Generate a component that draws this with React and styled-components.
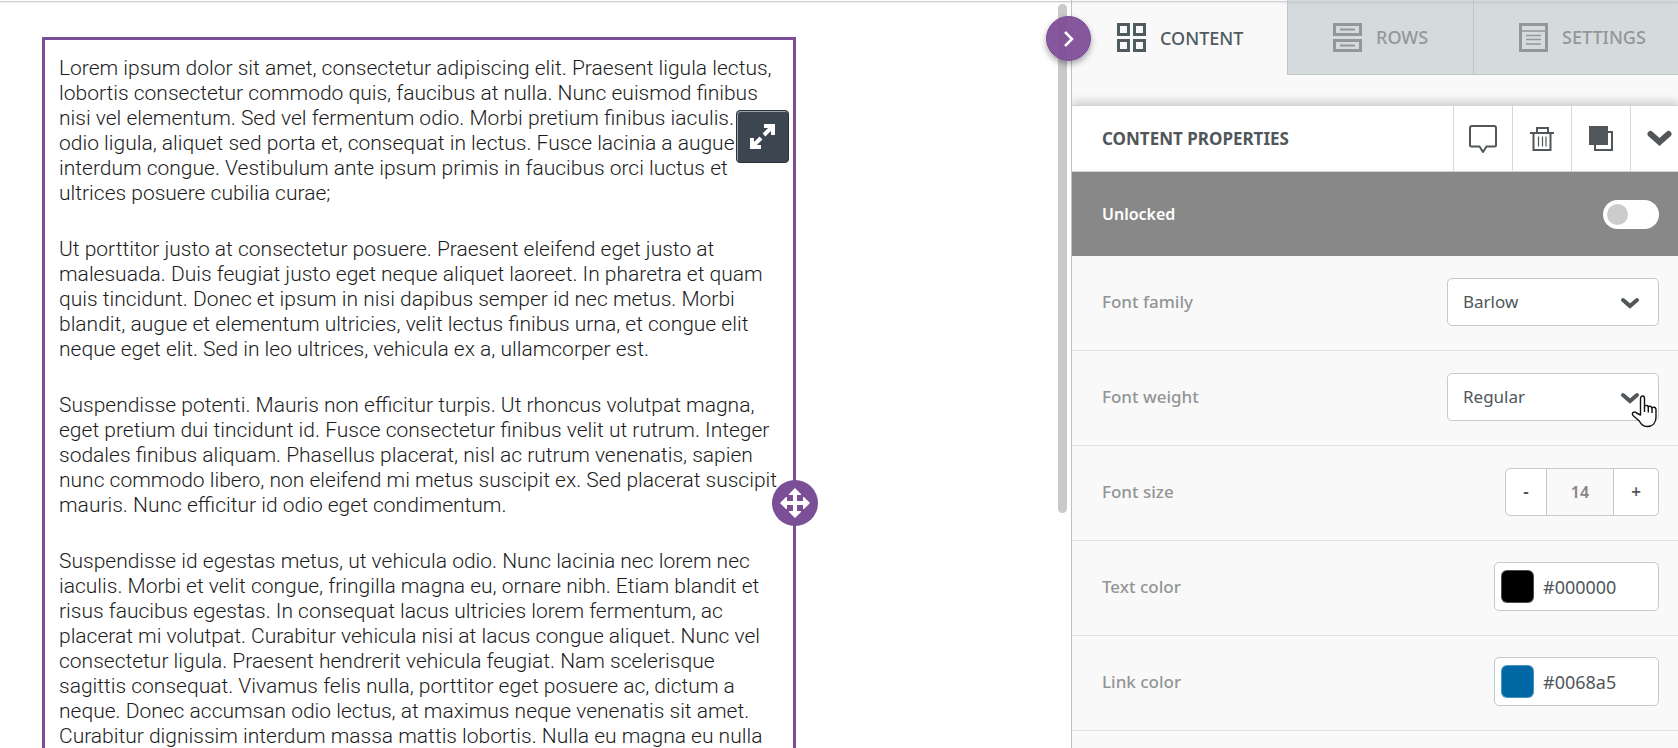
import React, { useState } from "react";
import styled, { createGlobalStyle } from "styled-components";

const GlobalStyle = createGlobalStyle`
  * {
    box-sizing: border-box;
  }

  body {
    margin: 0;
    overflow: hidden;
    background: #fff;
    color: #505659;
    font-family: "Noto Sans", "Open Sans", sans-serif;
  }

  button,
  input,
  select {
    margin: 0;
    font: inherit;
    color: inherit;
  }
`;

const Page = styled.div`
  display: grid;
  grid-template-columns: minmax(0, 1fr) minmax(480px, 607px);
  height: 100vh;
  overflow: hidden;
  position: relative;

  &::before {
    content: "";
    position: absolute;
    top: 1px;
    left: 0;
    right: 0;
    height: 1px;
    background: #ccd1d0;
    box-shadow: 0 1px 2px rgba(0, 0, 0, 0.12);
    z-index: 2;
  }
`;

const Stage = styled.main`
  display: flex;
  justify-content: space-between;
  min-width: 0;
  overflow: hidden;
  padding: 4px 4px 0 42px;
`;

const TextBlock = styled.article`
  position: relative;
  flex: 0 1 754px;
  min-width: 0;
  min-height: 1000px;
  margin-top: 33px;
  padding: 16px 14px;
  border: 3px solid #7b4f96;
  color: #1c1c1c;
  font-family: Roboto, sans-serif;
  font-size: 21px;
  font-weight: 300;
  line-height: 25px;
  white-space: nowrap;
`;

const Paragraph = styled.p`
  margin: 0 0 31px;
`;

const ExpandButton = styled.button`
  position: absolute;
  top: 70px;
  right: 4px;
  display: grid;
  place-items: center;
  width: 53px;
  height: 53px;
  padding: 0;
  border: 1px solid #2a333b;
  border-radius: 4px;
  background: #3b4650;
  box-shadow: inset 1px 1px rgba(255, 255, 255, 0.5);
`;

const MoveHandle = styled.button`
  position: absolute;
  top: 440px;
  right: -25px;
  display: grid;
  place-items: center;
  width: 46px;
  height: 46px;
  padding: 0;
  border: 0;
  border-radius: 50%;
  background: #7b4f96;
`;

const ScrollThumb = styled.div`
  flex: none;
  width: 9px;
  height: 509px;
  border-radius: 5px;
  background: #c9c9c9;
`;

const Panel = styled.aside`
  position: relative;
  min-width: 0;
  border-left: 1px solid #bfc2c3;
  background: #f9f9f9;
`;

const CollapseButton = styled.button`
  position: absolute;
  top: 16px;
  left: -26px;
  z-index: 3;
  display: grid;
  place-items: center;
  width: 45px;
  height: 45px;
  padding: 0;
  border: 1px solid #77498f;
  border-radius: 50%;
  background: rgba(127, 77, 152, 0.94);
  box-shadow: 0 3px 6px rgba(0, 0, 0, 0.35);
`;

const Tabs = styled.nav`
  display: grid;
  grid-template-columns: 215fr 186fr 205fr;
  height: 75px;
`;

const Tab = styled.button`
  display: flex;
  align-items: center;
  gap: 14px;
  min-width: 0;
  padding: 0 0 0 45px;
  border: 0;
  border-left: ${(props) => (props.$active ? "0" : "1px solid #c1c7c9")};
  border-bottom: ${(props) => (props.$active ? "0" : "1px solid #c1c7c9")};
  background: ${(props) => (props.$active ? "transparent" : "#d5dadd")};
  color: ${(props) => (props.$active ? "#505b60" : "#949799")};
  font-size: 18px;
  font-weight: 500;

  svg {
    flex: none;
  }
`;

const PanelHeader = styled.header`
  display: flex;
  align-items: stretch;
  height: 67px;
  margin-top: 30px;
  border-top: 1px solid #d2d4d4;
  border-bottom: 1px solid #d2d4d4;
  background: #fff;
  box-shadow: 0 -4px 8px rgba(0, 0, 0, 0.16);
  clip-path: inset(-14px 0 0 0);
`;

const PanelTitle = styled.h2`
  flex: 1;
  align-self: center;
  margin: 0;
  padding-left: 30px;
  font-size: 17px;
  font-weight: 700;
  line-height: 24px;
`;

const HeaderButton = styled.button`
  display: flex;
  align-items: center;
  justify-content: ${(props) => (props.$last ? "flex-start" : "center")};
  width: ${(props) => (props.$last ? "48px" : "59px")};
  padding: 0 0 0 ${(props) => (props.$last ? "16px" : "0")};
  border: 0;
  border-left: 1px solid #d8d8d8;
  background: transparent;
`;

const LockRow = styled.label`
  display: flex;
  align-items: center;
  justify-content: space-between;
  height: 84px;
  padding: 0 19px 0 30px;
  background: #888;
  color: #fff;
  font-size: 16px;
  font-weight: 600;
`;

const Switch = styled.input`
  appearance: none;
  display: flex;
  align-items: center;
  width: 56px;
  height: 29px;
  padding: 4px;
  border-radius: 15px;
  background: #fff;

  &::before {
    content: "";
    width: 21px;
    height: 21px;
    border-radius: 50%;
    background: #ccc;
  }

  &:checked {
    justify-content: flex-end;
  }
`;

const Row = styled.div`
  display: flex;
  align-items: center;
  justify-content: space-between;
  height: 95px;
  padding: 0 19px 3px 30px;
  border-bottom: 1px solid #dde3e3;
`;

const RowLabel = styled.label`
  color: #929596;
  font-size: 17px;
  font-weight: 500;
`;

const SelectWrap = styled.div`
  position: relative;
  width: 212px;
`;

const Select = styled.select`
  appearance: none;
  display: block;
  width: 100%;
  height: 48px;
  padding: 0 48px 0 15px;
  border: 1px solid #c9c9c9;
  border-radius: 5px;
  background: #fff;
  font-size: 17px;
  font-weight: 400;
`;

const SelectArrow = styled.svg`
  position: absolute;
  top: 19px;
  right: 19px;
  pointer-events: none;
`;

const Pointer = styled.svg`
  position: absolute;
  top: 22px;
  right: 1px;
  pointer-events: none;
`;

const Stepper = styled.div`
  display: flex;
  height: 48px;
  border: 1px solid #c9c9c9;
  border-radius: 5px;
  background: #fff;
  overflow: hidden;
`;

const StepButton = styled.button`
  width: ${(props) => props.$width};
  padding: 0;
  border: 0;
  background: transparent;
  font-size: 17px;
  font-weight: 600;
`;

const StepValue = styled.input`
  width: 68px;
  padding: 0;
  border: 0;
  border-left: 1px solid #c9c9c9;
  border-right: 1px solid #c9c9c9;
  background: #f9f9f9;
  color: #868686;
  font-size: 16px;
  font-weight: 600;
  text-align: center;
`;

const ColorField = styled.div`
  display: flex;
  align-items: center;
  gap: 9px;
  width: 165px;
  height: 49px;
  padding: 0 6px;
  border: 1px solid #c9c9c9;
  border-radius: 5px;
  background: #fff;
`;

const Swatch = styled.button`
  flex: none;
  width: 33px;
  height: 33px;
  padding: 0;
  border: 1px solid rgba(255, 255, 255, 0.3);
  border-radius: 6px;
  background: ${(props) => props.$color};
`;

const ColorInput = styled.input`
  flex: 1;
  min-width: 0;
  padding: 0;
  border: 0;
  background: transparent;
  font-size: 18px;
`;

const paragraphs = [
  [
    "Lorem ipsum dolor sit amet, consectetur adipiscing elit. Praesent ligula lectus,",
    "lobortis consectetur commodo quis, faucibus at nulla. Nunc euismod finibus",
    "nisi vel elementum. Sed vel fermentum odio. Morbi pretium finibus iaculis. Nam",
    "odio ligula, aliquet sed porta et, consequat in lectus. Fusce lacinia a augue",
    "interdum congue. Vestibulum ante ipsum primis in faucibus orci luctus et",
    "ultrices posuere cubilia curae;",
  ],
  [
    "Ut porttitor justo at consectetur posuere. Praesent eleifend eget justo at",
    "malesuada. Duis feugiat justo eget neque aliquet laoreet. In pharetra et quam",
    "quis tincidunt. Donec et ipsum in nisi dapibus semper id nec metus. Morbi",
    "blandit, augue et elementum ultricies, velit lectus finibus urna, et congue elit",
    "neque eget elit. Sed in leo ultrices, vehicula ex a, ullamcorper est.",
  ],
  [
    "Suspendisse potenti. Mauris non efficitur turpis. Ut rhoncus volutpat magna,",
    "eget pretium dui tincidunt id. Fusce consectetur finibus velit ut rutrum. Integer",
    "sodales finibus aliquam. Phasellus placerat, nisl ac rutrum venenatis, sapien",
    "nunc commodo libero, non eleifend mi metus suscipit ex. Sed placerat suscipit",
    "mauris. Nunc efficitur id odio eget condimentum.",
  ],
  [
    "Suspendisse id egestas metus, ut vehicula odio. Nunc lacinia nec lorem nec",
    "iaculis. Morbi et velit congue, fringilla magna eu, ornare nibh. Etiam blandit et",
    "risus faucibus egestas. In consequat lacus ultricies lorem fermentum, ac",
    "placerat mi volutpat. Curabitur vehicula nisi at lacus congue aliquet. Nunc vel",
    "consectetur ligula. Praesent hendrerit vehicula feugiat. Nam scelerisque",
    "sagittis consequat. Vivamus felis nulla, porttitor eget posuere ac, dictum a",
    "neque. Donec accumsan odio lectus, at maximus neque venenatis sit amet.",
    "Curabitur dignissim interdum massa mattis lobortis. Nulla eu magna eu nulla",
  ],
];

function ContentIcon() {
  return (
    <svg width="29" height="29" fill="none" stroke="currentColor" strokeWidth="3">
      <path d="M1.5 1.5h10v10h-10zM17.5 1.5h10v10h-10zM1.5 17.5h10v10h-10zM17.5 17.5h10v10h-10z" />
    </svg>
  );
}

function RowsIcon() {
  return (
    <svg width="29" height="29" fill="none" stroke="currentColor" strokeWidth="3">
      <path d="M1.5 1.5h26v10h-26zM1.5 17.5h26v10h-26z" />
      <path d="M7 6.5h15M7 22.5h15" strokeWidth="2" />
    </svg>
  );
}

function SettingsIcon() {
  return (
    <svg width="29" height="29" fill="none" stroke="currentColor">
      <path d="M1.5 1.5h26v26h-26z" strokeWidth="3" />
      <path d="M2 8h25M7 12.5h15M7 16.5h15M7 21h15" strokeWidth="1.5" />
    </svg>
  );
}

function CommentIcon() {
  return (
    <svg width="28" height="28" fill="none" stroke="currentColor" strokeWidth="2" strokeLinejoin="round">
      <path d="M3 1h22a2 2 0 0 1 2 2v17a1.5 1.5 0 0 1-1.5 1.5h-8L14 27l-3.5-5.5h-8A1.5 1.5 0 0 1 1 20V3a2 2 0 0 1 2-2z" />
    </svg>
  );
}

function TrashIcon() {
  return (
    <svg width="24" height="26" fill="none" stroke="currentColor" strokeWidth="2">
      <path d="M0 7h24M7 6V2h11v4" />
      <path d="M3.5 7v17h17V7" />
      <path d="M8.5 10.5v10M12.5 10.5v10M16 10.5v10" strokeWidth="1.2" />
    </svg>
  );
}

function DuplicateIcon() {
  return (
    <svg width="24" height="25" fill="none" stroke="currentColor" strokeWidth="2">
      <path d="M18 6h5v18H6v-5" />
      <path d="M0 0h19v19H0z" fill="currentColor" stroke="none" />
    </svg>
  );
}

function FieldSelect({ id, options, children }) {
  return (
    <SelectWrap>
      <Select id={id}>
        {options.map((option) => (
          <option key={option}>{option}</option>
        ))}
      </Select>
      <SelectArrow width="20" height="13" fill="none" stroke="#505659" strokeWidth="4" strokeLinecap="round">
        <path d="M3 3l7 6 7-6" />
      </SelectArrow>
      {children}
    </SelectWrap>
  );
}

function FieldColor({ id, label, initial }) {
  const [color, setColor] = useState(initial);

  return (
    <Row>
      <RowLabel htmlFor={id}>{label}</RowLabel>
      <ColorField>
        <Swatch type="button" aria-label={`Pick ${label.toLowerCase()}`} $color={color} />
        <ColorInput id={id} value={color} onChange={(e) => setColor(e.target.value)} />
      </ColorField>
    </Row>
  );
}

function Editor() {
  return (
    <Stage>
      <TextBlock>
        {paragraphs.map((lines) => (
          <Paragraph key={lines[0]}>
            {lines.map((line) => (
              <React.Fragment key={line}>
                {line}
                <br />
              </React.Fragment>
            ))}
          </Paragraph>
        ))}
        <ExpandButton type="button" aria-label="Expand">
          <svg width="25" height="25" fill="none" stroke="#fff" strokeWidth="4">
            <path d="M14 11l8-8M14 2h9v9M11 14l-8 8M2 14v9h9" />
          </svg>
        </ExpandButton>
        <MoveHandle type="button" aria-label="Move block">
          <svg width="30" height="30" fill="#fff">
            <path d="M15 0l6 6v1h-4v6h6V9h1l6 6-6 6h-1v-4h-6v6h4v1l-6 6-6-6v-1h4v-6H7v4H6l-6-6 6-6h1v4h6V7H9V6z" />
          </svg>
        </MoveHandle>
      </TextBlock>
      <ScrollThumb />
    </Stage>
  );
}

function App() {
  const [unlocked, setUnlocked] = useState(false);
  const [size, setSize] = useState(14);

  return (
    <Page>
      <GlobalStyle />
      <Editor />

      <Panel>
        <CollapseButton type="button" aria-label="Collapse panel">
          <svg width="12" height="18" fill="none" stroke="#fff" strokeWidth="2.5">
            <path d="M2 2l7 7-7 7" />
          </svg>
        </CollapseButton>

        <Tabs>
          <Tab type="button" $active>
            <ContentIcon />
            CONTENT
          </Tab>
          <Tab type="button">
            <RowsIcon />
            ROWS
          </Tab>
          <Tab type="button">
            <SettingsIcon />
            SETTINGS
          </Tab>
        </Tabs>

        <PanelHeader>
          <PanelTitle>CONTENT PROPERTIES</PanelTitle>
          <HeaderButton type="button" aria-label="Comment">
            <CommentIcon />
          </HeaderButton>
          <HeaderButton type="button" aria-label="Delete">
            <TrashIcon />
          </HeaderButton>
          <HeaderButton type="button" aria-label="Duplicate">
            <DuplicateIcon />
          </HeaderButton>
          <HeaderButton type="button" aria-label="Close" $last>
            <svg width="25" height="17" fill="none" stroke="currentColor" strokeWidth="6" strokeLinecap="round">
              <path d="M3.5 4l9 8 9-8" />
            </svg>
          </HeaderButton>
        </PanelHeader>

        <LockRow>
          Unlocked
          <Switch
            type="checkbox"
            role="switch"
            checked={unlocked}
            onChange={(e) => setUnlocked(e.target.checked)}
          />
        </LockRow>

        <Row>
          <RowLabel htmlFor="family">Font family</RowLabel>
          <FieldSelect id="family" options={["Barlow"]} />
        </Row>

        <Row>
          <RowLabel htmlFor="weight">Font weight</RowLabel>
          <FieldSelect id="weight" options={["Regular"]}>
            <Pointer width="27" height="33" fill="#fff" stroke="#111" strokeWidth="1.4" strokeLinejoin="round">
              <path d="M9.5 20V3.5c0-3.3 4-3.3 4 0V12c0-2.2 3.8-2.2 3.8.5 0-1.9 3.7-1.9 3.7 1 0-1.8 4-1.8 4 1.2V22c0 6-3.5 9.5-9 9.5-4 0-6.2-2.5-7.7-5.5L2 20.5c-1.8-3 1.2-4.5 3.5-2.5z" />
              <path d="M13.5 12v5M17.3 12.5v5M21 13.5v4.5" />
            </Pointer>
          </FieldSelect>
        </Row>

        <Row>
          <RowLabel htmlFor="size">Font size</RowLabel>
          <Stepper>
            <StepButton type="button" aria-label="Decrease" $width="40px" onClick={() => setSize(size - 1)}>
              -
            </StepButton>
            <StepValue id="size" value={size} onChange={(e) => setSize(Number(e.target.value))} />
            <StepButton type="button" aria-label="Increase" $width="44px" onClick={() => setSize(size + 1)}>
              +
            </StepButton>
          </Stepper>
        </Row>

        <FieldColor id="text-color" label="Text color" initial="#000000" />
        <FieldColor id="link-color" label="Link color" initial="#0068a5" />
      </Panel>
    </Page>
  );
}

export default App;
